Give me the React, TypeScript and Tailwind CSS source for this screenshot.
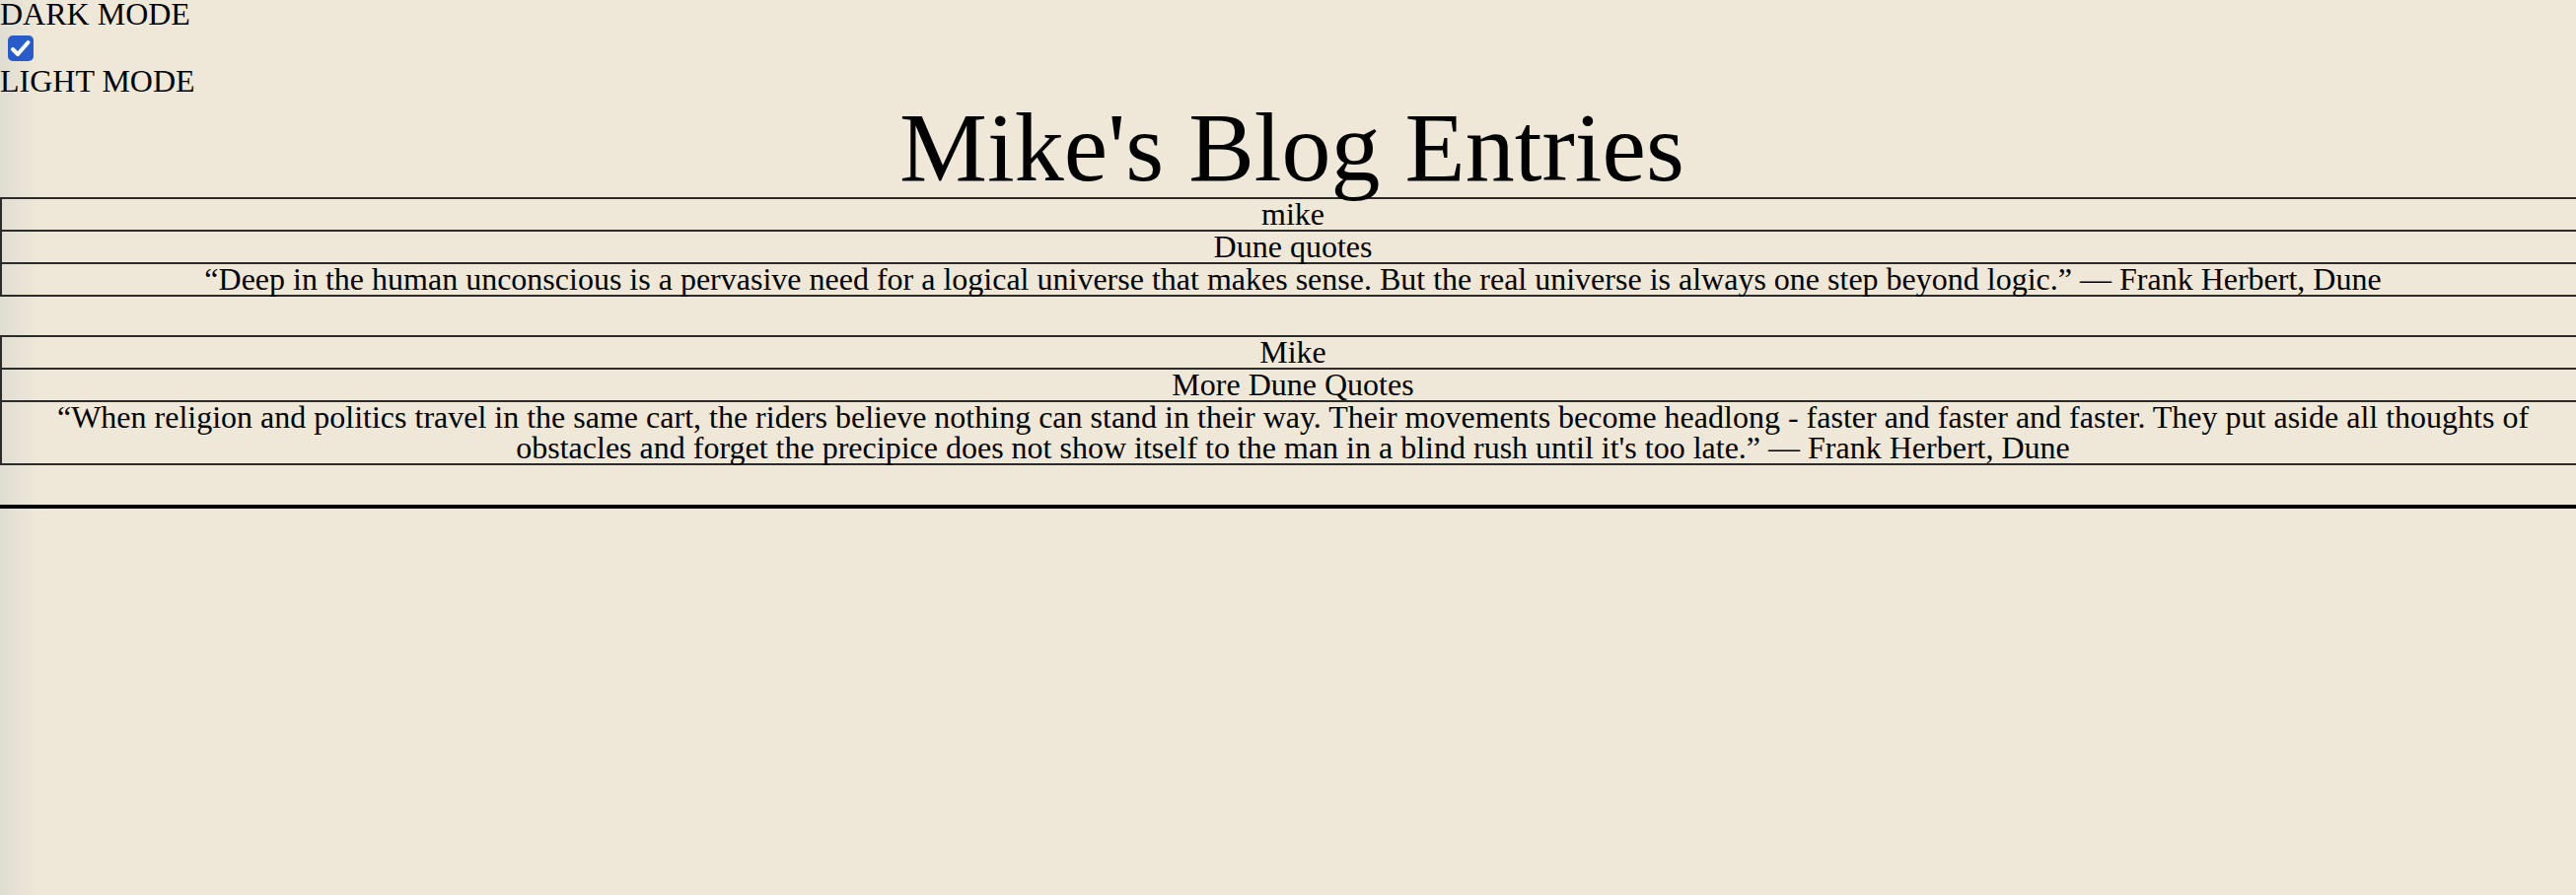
import React from "react";

type Entry = {
  author: string;
  title: string;
  body: string;
};

const entries: Entry[] = [
  {
    author: "mike",
    title: "Dune quotes",
    body: "“Deep in the human unconscious is a pervasive need for a logical universe that makes sense. But the real universe is always one step beyond logic.” — Frank Herbert, Dune",
  },
  {
    author: "Mike",
    title: "More Dune Quotes",
    body: "“When religion and politics travel in the same cart, the riders believe nothing can stand in their way. Their movements become headlong - faster and faster and faster. They put aside all thoughts of obstacles and forget the precipice does not show itself to the man in a blind rush until it's too late.” — Frank Herbert, Dune",
  },
];

const Cell: React.FC<{ children: React.ReactNode }> = ({ children }) => (
  <tr>
    <td className="border-y-2 border-l-2 border-[#2b2b2b] p-0 px-[2px] text-center leading-[31px]">
      {children}
    </td>
  </tr>
);

const ModeToggle: React.FC = () => (
  <>
    <div className="h-[32px] leading-[28px]">DARK MODE</div>
    <div className="h-[36px] pt-[4px] pl-[8px]">
      <label className="relative block h-[26px] w-[26px]">
        <input
          type="checkbox"
          defaultChecked
          className="block h-[26px] w-[26px] appearance-none rounded-[5px] bg-[#2a5cc9]"
        />
        <svg
          viewBox="0 0 26 26"
          className="pointer-events-none absolute left-0 top-0 h-[26px] w-[26px]"
        >
          <path
            d="M5 14 L10 19 L20.5 7"
            fill="none"
            stroke="white"
            strokeWidth="4"
            strokeLinecap="round"
            strokeLinejoin="round"
          />
        </svg>
      </label>
    </div>
    <div className="h-[32px] leading-[28px]">LIGHT MODE</div>
  </>
);

const App: React.FC = () => {
  return (
    <div className="h-[908px] w-full overflow-hidden bg-[linear-gradient(to_right,#e0ddd2,#efe8d8_40px)] font-['Liberation_Serif','Times_New_Roman',serif] text-[32px] leading-[32px] text-black">
      <div className="w-[2620px]">
        <ModeToggle />
        <h1 className="text-center text-[100px] font-normal leading-[100px]">
          Mike's Blog Entries
        </h1>
        {entries.map(({ author, title, body }, idx) => (
          <table
            key={idx}
            className={
              idx === 0
                ? "w-full border-collapse"
                : "mt-[39px] w-full border-collapse"
            }
          >
            <tbody>
              <Cell>{author}</Cell>
              <Cell>{title}</Cell>
              <Cell>{body}</Cell>
            </tbody>
          </table>
        ))}
        <div className="mt-[40px] h-[4px] w-full bg-black" />
      </div>
    </div>
  );
};

export default App;
